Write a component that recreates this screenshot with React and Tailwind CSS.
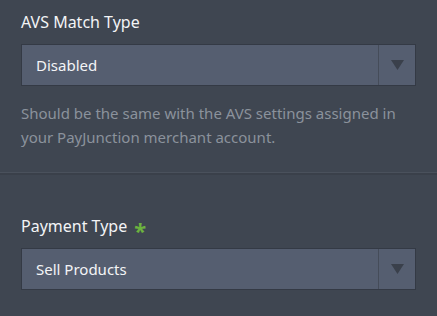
import React from 'react';

const Caret = () => (
  <svg width="13" height="10" viewBox="0 0 13 10" className="block">
    <path d="M0 0 H13 L6.5 10 Z" fill="#3a404b" />
  </svg>
);

const SelectBox = ({ value }) => (
  <div className="flex h-[42px] w-[395px] border border-[#343a45] bg-[#555e70]">
    <div className="flex flex-1 items-center pl-[14px] text-[15px] text-[#f3f4f6]">{value}</div>
    <div className="flex w-[37px] items-center justify-center border-l border-[#454c59]">
      <Caret />
    </div>
  </div>
);

export default function App() {
  return (
    <div
      className="h-[316px] w-[437px] overflow-hidden bg-[#3f4651]"
      style={{ fontFamily: '"Noto Sans", "Open Sans", sans-serif' }}
    >
      <div className="px-[21px] pt-[10px] pb-[23px]">
        <div className="text-[16px] leading-[24px] text-[#f3f4f6]">AVS Match Type</div>
        <div className="mt-[10px]">
          <SelectBox value="Disabled" />
        </div>
        <p className="mt-[15px] max-w-[385px] text-[15px] leading-[24px] text-[#8b929c]">
          Should be the same with the AVS settings assigned in your PayJunction merchant account.
        </p>
      </div>
      <div className="h-[3px] border-t border-[#4a515c] bg-[#3a404a]" />
      <div className="px-[21px] pt-[39px]">
        <div className="flex items-center gap-[7px] text-[16px] leading-[24px] text-[#f3f4f6]">
          Payment Type
          <span className="translate-y-[4px] text-[22px] font-bold leading-none text-[#6cb33f]">*</span>
        </div>
        <div className="mt-[10px]">
          <SelectBox value="Sell Products" />
        </div>
      </div>
    </div>
  );
}
